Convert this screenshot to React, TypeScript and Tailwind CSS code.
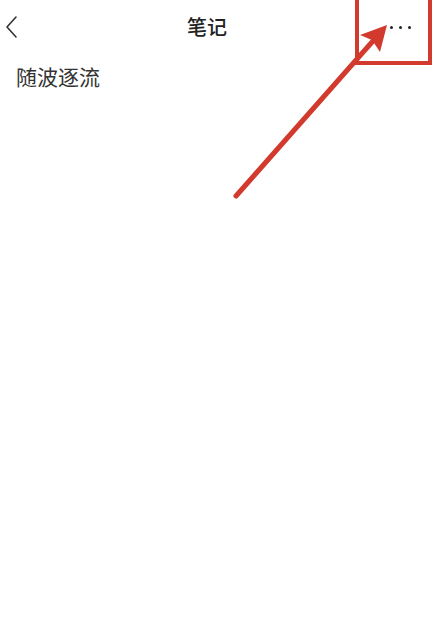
export default function App() {
  return (
    <div
      className="relative w-[433px] h-[628px] overflow-hidden bg-white text-[#222]"
      style={{ fontFamily: '"Noto Sans CJK SC", "Noto Sans", sans-serif' }}
    >
      <header className="flex items-center justify-between h-[54px] pl-[2px] pr-[22px]">
        <button className="w-[18px] h-[26px] flex items-center justify-center">
          <svg width="14" height="24" viewBox="0 0 14 24" fill="none">
            <path d="M12 2 L3 12 L12 22" stroke="#333" strokeWidth="1.6" strokeLinecap="round" strokeLinejoin="round" />
          </svg>
        </button>
        <h1 className="text-[20px] leading-none font-medium ml-[4px]">笔记</h1>
        <button className="flex items-center gap-[6px] h-[20px]">
          <span className="w-[3px] h-[3px] rounded-full bg-[#222]" />
          <span className="w-[3px] h-[3px] rounded-full bg-[#222]" />
          <span className="w-[3px] h-[3px] rounded-full bg-[#222]" />
        </button>
      </header>

      <p className="px-[16px] pt-[12px] text-[21px] leading-none text-[#333]">随波逐流</p>

      <svg className="absolute left-0 top-0 pointer-events-none" width="433" height="628" viewBox="0 0 433 628" fill="none">
        <rect x="357" y="-4" width="73" height="67" stroke="#d23a2e" strokeWidth="4" />
        <line x1="236" y1="196" x2="380" y2="33" stroke="#d23a2e" strokeWidth="5" strokeLinecap="round" />
        <path d="M387 25 L360 35 L372 40 L380 52 Z" fill="#d23a2e" />
      </svg>
    </div>
  )
}
